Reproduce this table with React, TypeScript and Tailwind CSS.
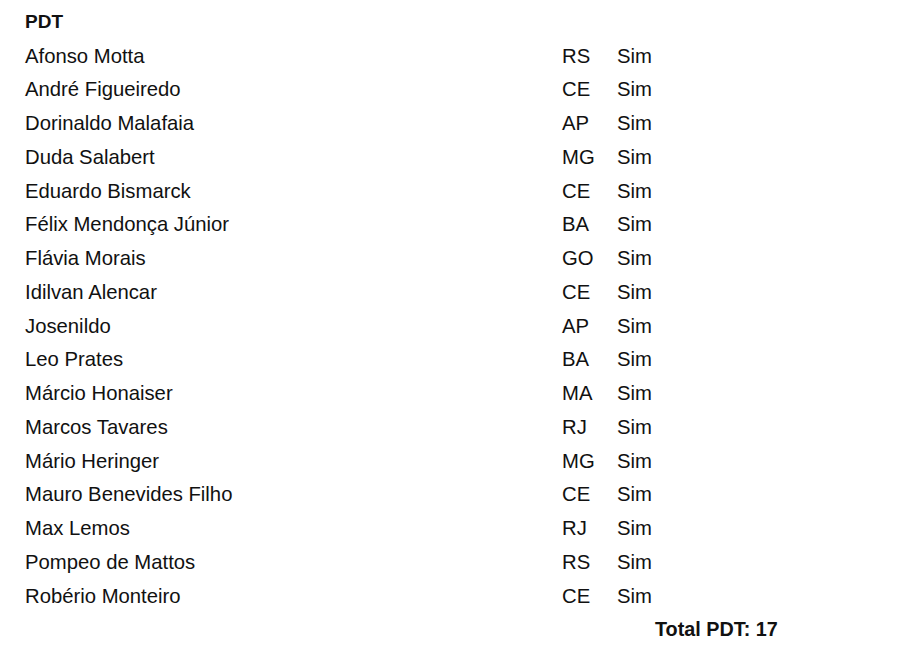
const rows: [string, string][] = [
  ["Afonso Motta", "RS"],
  ["André Figueiredo", "CE"],
  ["Dorinaldo Malafaia", "AP"],
  ["Duda Salabert", "MG"],
  ["Eduardo Bismarck", "CE"],
  ["Félix Mendonça Júnior", "BA"],
  ["Flávia Morais", "GO"],
  ["Idilvan Alencar", "CE"],
  ["Josenildo", "AP"],
  ["Leo Prates", "BA"],
  ["Márcio Honaiser", "MA"],
  ["Marcos Tavares", "RJ"],
  ["Mário Heringer", "MG"],
  ["Mauro Benevides Filho", "CE"],
  ["Max Lemos", "RJ"],
  ["Pompeo de Mattos", "RS"],
  ["Robério Monteiro", "CE"],
];

export default function App() {
  return (
    <div
      className="min-h-[650px] w-[923px] bg-white pl-[25px] pt-[10px] text-[#111111]"
      style={{ fontFamily: '"Liberation Sans", Arial, sans-serif' }}
    >
      <div className="mb-[5px] h-[24px] text-[19px] font-bold leading-[24px]">PDT</div>
      <div className="flex flex-col">
        {rows.map(([name, uf]) => (
          <div key={name} className="grid h-[33.75px] grid-cols-[537px_55px_auto] items-center text-[20.3px]">
            <span>{name}</span>
            <span>{uf}</span>
            <span>Sim</span>
          </div>
        ))}
      </div>
      <div className="flex h-[33.75px] items-center pl-[630px] text-[19.8px] font-bold">Total PDT: 17</div>
    </div>
  );
}
